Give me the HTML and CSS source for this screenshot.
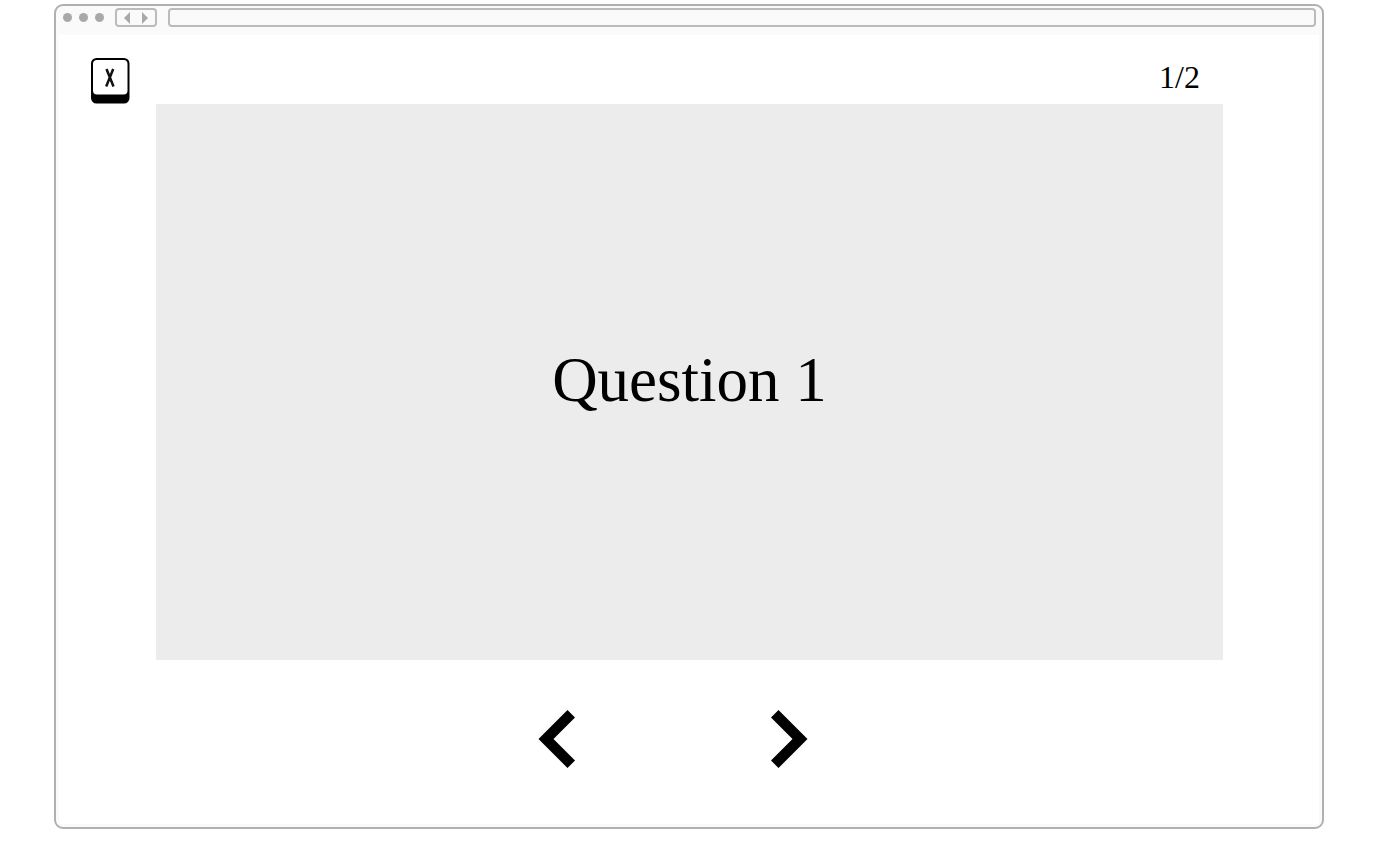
FILE: index.html
```html
<!DOCTYPE html>
<html lang="en">
<head>
<meta charset="utf-8">
<title>Question 1</title>
<link rel="stylesheet" href="styles.css">
</head>
<body>
<div class="browser">
  <header class="toolbar">
    <span class="dots"><span class="dot"></span><span class="dot"></span><span class="dot"></span></span>
    <span class="history">
      <button class="history-button" type="button" aria-label="Back"><svg width="6" height="12" viewBox="0 0 6 12"><path d="M6 0v12L0 6z"/></svg></button>
      <button class="history-button" type="button" aria-label="Forward"><svg width="6" height="12" viewBox="0 0 6 12"><path d="M0 0v12l6-6z"/></svg></button>
    </span>
    <input class="address" type="text" aria-label="Address">
  </header>
  <main class="page">
    <div class="top">
      <button class="close" type="button" aria-label="Close">
        <svg width="40" height="47" viewBox="0 0 40 47">
          <rect x="1" y="1" width="38.500" height="45.500" rx="5.500" fill="#000"/>
          <rect x="3" y="3" width="34.500" height="34.500" rx="4" fill="#fff"/>
          <path d="M16.500 12L23.500 29.500M23.200 12L16.200 29.500" fill="none" stroke="#111" stroke-width="2.500"/>
        </svg>
      </button>
      <span class="counter">1/2</span>
    </div>
    <section class="stage"><h1 class="question">Question 1</h1></section>
    <nav class="pager" aria-label="Questions">
      <button class="arrow" type="button" aria-label="Previous question"><svg width="38" height="58" viewBox="0 0 38 58"><path d="M29.500 0L37 7.500 15.500 29 37 50.500 29.500 58 .5 29z"/></svg></button>
      <button class="arrow" type="button" aria-label="Next question"><svg width="38" height="58" viewBox="0 0 38 58"><path d="M8.500 0L1 7.500 22.500 29 1 50.500 8.500 58 37.500 29z"/></svg></button>
    </nav>
  </main>
</div>
</body>
</html>
```
FILE: styles.css
```css
* { box-sizing: border-box; }

body {
  display: flex;
  min-height: 100vh;
  margin: 0;
  padding: 4px 74px 13px 54px;
  background: #fff;
  color: #000;
  font-family: "Liberation Serif", "Times New Roman", serif;
}

button {
  display: block;
  padding: 0;
  border: 0;
  background: none;
  cursor: pointer;
}

svg { display: block; }

.browser {
  display: flex;
  flex: 1;
  flex-direction: column;
  padding: 0 3px 3px;
  border: 2px solid #b0b0b0;
  border-radius: 9px;
  background: #fafafa;
}

.toolbar {
  display: flex;
  align-items: flex-start;
  height: 29px;
  padding: 2px 3px 0 4px;
}

.dots {
  display: flex;
  gap: 7px;
  padding-top: 5px;
}

.dot {
  width: 9px;
  height: 9px;
  border-radius: 50%;
  background: #a9a9a9;
}

.history {
  display: flex;
  align-items: center;
  justify-content: center;
  gap: 12px;
  width: 42px;
  height: 19px;
  margin: 0 11px;
  border: 2px solid #bbb;
  border-radius: 4px;
}

.history-button { fill: #a9a9a9; }

.address {
  flex: 1;
  min-width: 0;
  height: 19px;
  padding: 0 6px;
  border: 2px solid #bbb;
  border-radius: 4px;
  background: #fafafa;
  font: 12px "Liberation Sans", sans-serif;
}

.page {
  display: flex;
  flex: 1;
  flex-direction: column;
  padding: 22px 96px 56px 31px;
  background: #fff;
}

.top {
  display: flex;
  align-items: flex-start;
  justify-content: space-between;
  padding-right: 23px;
}

.counter {
  padding-top: 2px;
  font-size: 32px;
  line-height: 36px;
}

.stage {
  display: flex;
  flex: 1;
  align-items: center;
  justify-content: center;
  margin-left: 66px;
  padding-bottom: 4px;
  background: #ececec;
}

.question {
  margin: 0;
  font-size: 63px;
  font-weight: 400;
  line-height: 72px;
}

.pager {
  display: flex;
  justify-content: center;
  gap: 194px;
  padding: 50px 0 0 33px;
}
```
